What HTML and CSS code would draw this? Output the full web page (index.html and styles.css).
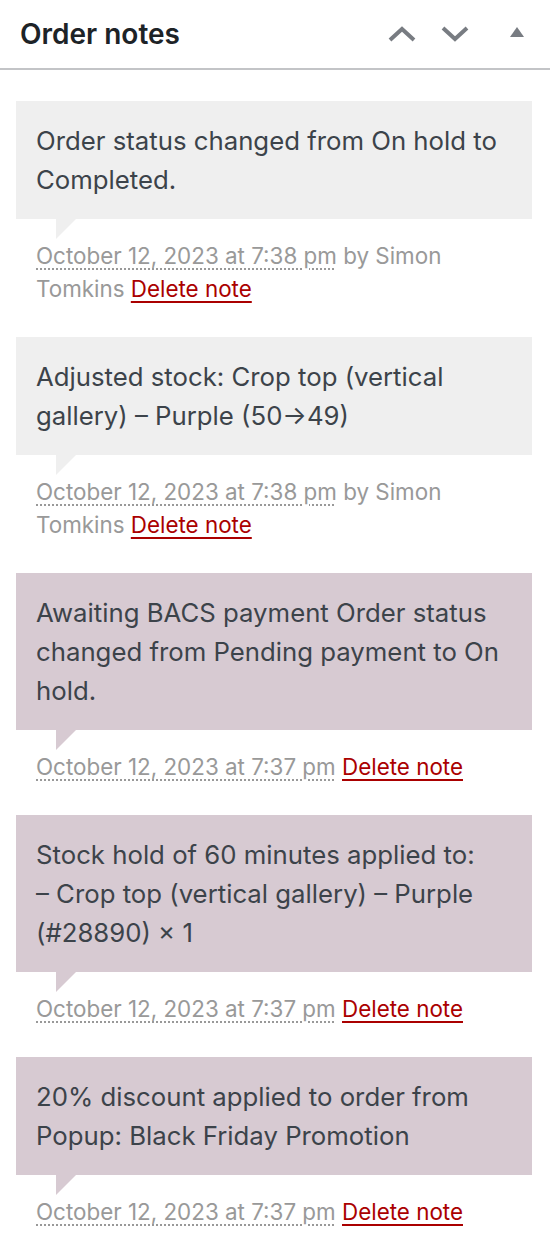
FILE: index.html
```html
<!DOCTYPE html>
<html lang="en">
<head>
    <meta charset="UTF-8">
    <meta name="viewport" content="width=device-width, initial-scale=1.0">
    <title>Order notes</title>
    <link rel="stylesheet" href="styles.css">
</head>
<body>
    <div class="postbox">
        <div class="postbox_header">
            <h2 class="hndle">Order notes</h2>
            <div class="handle_actions">
                <button class="handle_btn" aria-label="Move up">
                    <svg width="28" height="18" viewBox="0 0 28 18"><path d="M2 15 L14 4 L26 15" fill="none" stroke="#787c82" stroke-width="4"/></svg>
                </button>
                <button class="handle_btn" aria-label="Move down">
                    <svg width="28" height="18" viewBox="0 0 28 18"><path d="M2 3 L14 14 L26 3" fill="none" stroke="#787c82" stroke-width="4"/></svg>
                </button>
                <button class="handle_btn toggle" aria-label="Toggle panel">
                    <svg width="16" height="12" viewBox="0 0 16 12"><path d="M8 1 L15 11 L1 11 Z" fill="#787c82"/></svg>
                </button>
            </div>
        </div>

        <ul class="order_notes">
            <li class="note">
                <div class="note_content">
                    <p>Order status changed from On hold to Completed.</p>
                </div>
                <p class="meta">
                    <abbr class="exact-date" title="2023-10-12 19:38:00">October 12, 2023 at 7:38 pm</abbr>
                    by Simon Tomkins <a href="#" class="delete_note">Delete note</a>
                </p>
            </li>
            <li class="note">
                <div class="note_content">
                    <p>Adjusted stock: Crop top (vertical gallery) – Purple (50→49)</p>
                </div>
                <p class="meta">
                    <abbr class="exact-date" title="2023-10-12 19:38:00">October 12, 2023 at 7:38 pm</abbr>
                    by Simon Tomkins <a href="#" class="delete_note">Delete note</a>
                </p>
            </li>
            <li class="note system-note">
                <div class="note_content">
                    <p>Awaiting BACS payment Order status changed from Pending payment to On hold.</p>
                </div>
                <p class="meta">
                    <abbr class="exact-date" title="2023-10-12 19:37:00">October 12, 2023 at 7:37 pm</abbr>
                    <a href="#" class="delete_note">Delete note</a>
                </p>
            </li>
            <li class="note system-note">
                <div class="note_content">
                    <p>Stock hold of 60 minutes applied to:<br>– Crop top (vertical gallery) – Purple (#28890) × 1</p>
                </div>
                <p class="meta">
                    <abbr class="exact-date" title="2023-10-12 19:37:00">October 12, 2023 at 7:37 pm</abbr>
                    <a href="#" class="delete_note">Delete note</a>
                </p>
            </li>
            <li class="note system-note">
                <div class="note_content">
                    <p>20% discount applied to order from Popup: Black Friday Promotion</p>
                </div>
                <p class="meta">
                    <abbr class="exact-date" title="2023-10-12 19:37:00">October 12, 2023 at 7:37 pm</abbr>
                    <a href="#" class="delete_note">Delete note</a>
                </p>
            </li>
        </ul>
    </div>
</body>
</html>
```

FILE: styles.css
```css
*{
    margin: 0;
    padding: 0;
    box-sizing: border-box;
}
body{
    background: #fff;
    font-family: Inter, "Noto Sans", sans-serif;
    color: #3c434a;
}
.postbox_header{
    display: flex;
    align-items: center;
    justify-content: space-between;
    height: 70px;
    padding: 0 7px 0 20px;
    border-bottom: 2px solid #c3c4c7;
}
.hndle{
    font-size: 28px;
    font-weight: 600;
    color: #1d2327;
}
.handle_actions{
    display: flex;
    align-items: center;
}
.handle_btn{
    background: none;
    border: none;
    width: 53px;
    height: 40px;
    display: flex;
    align-items: center;
    justify-content: center;
    cursor: pointer;
}
.handle_btn.toggle{
    margin-left: 9px;
    padding-bottom: 4px;
}
.order_notes{
    list-style: none;
    padding: 31px 18px 0 16px;
}
.note{
    margin-bottom: 12px;
}
.note_content{
    position: relative;
    background: #efefef;
    padding: 20px;
    font-size: 25.75px;
    line-height: 39px;
}
.note_content::after{
    content: "";
    position: absolute;
    left: 40px;
    bottom: -20px;
    border-width: 20px 20px 0 0;
    border-style: solid;
    border-color: #efefef transparent;
}
.system-note .note_content{
    background: #d7cad2;
}
.system-note .note_content::after{
    border-color: #d7cad2 transparent;
}
.meta{
    padding: 20px;
    font-size: 22.4px;
    line-height: 33px;
    color: #999;
}
.exact-date{
    text-decoration: underline dotted #999;
    text-decoration-thickness: 2px;
    text-underline-offset: 4px;
}
.delete_note{
    color: #a00;
    text-decoration-thickness: 2px;
    text-underline-offset: 4px;
}
```
